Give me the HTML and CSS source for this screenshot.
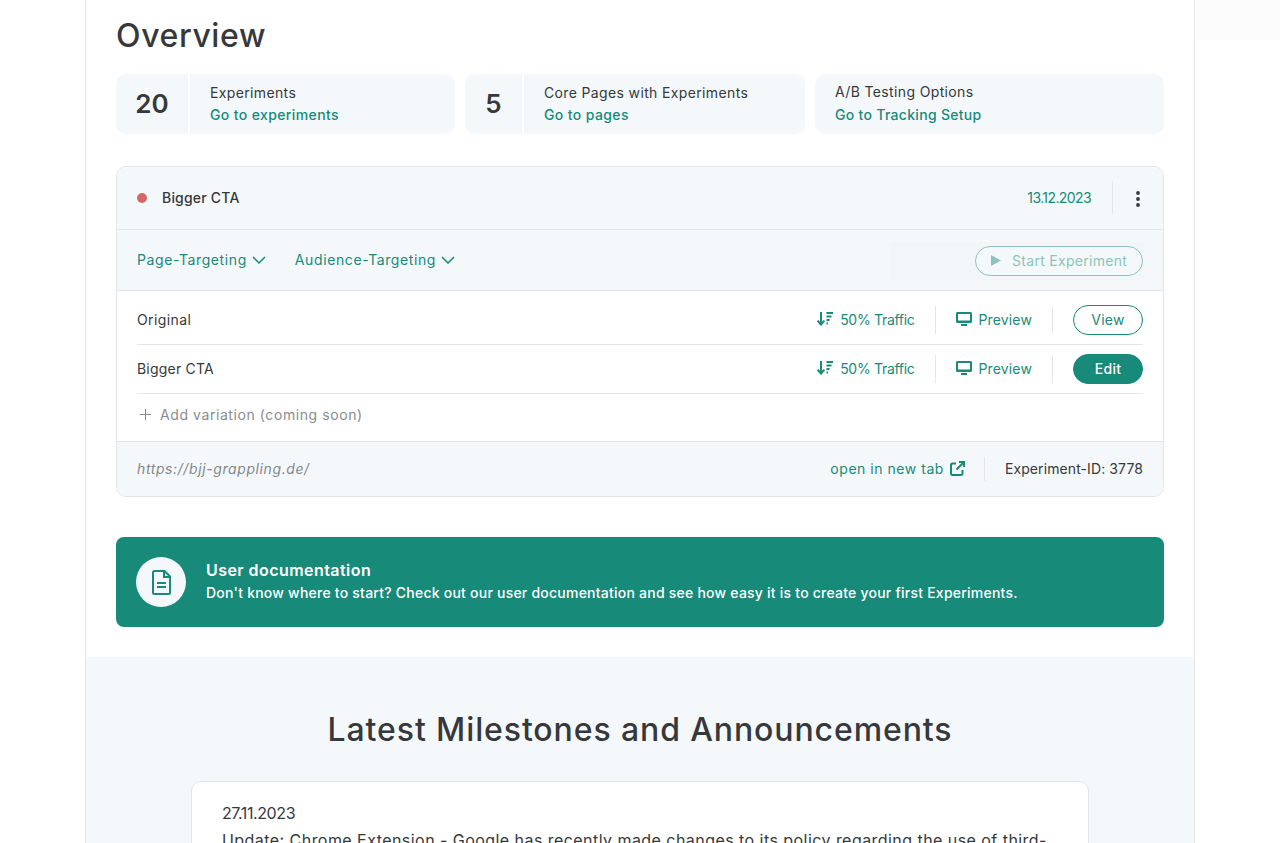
FILE: index.html
```html
<!DOCTYPE html>
<html lang="en">
<head>
<meta charset="utf-8">
<title>Overview</title>
<link rel="stylesheet" href="styles.css">
</head>
<body>
<div class="corner-fade"></div>
<main class="page">
  <section class="content">
    <h1 class="title">Overview</h1>
    <div class="stats">
      <div class="stat stat-a">
        <div class="stat-num">20</div>
        <div class="stat-body"><div class="stat-label">Experiments</div><a class="stat-link">Go to experiments</a></div>
      </div>
      <div class="stat stat-b">
        <div class="stat-num">5</div>
        <div class="stat-body"><div class="stat-label">Core Pages with Experiments</div><a class="stat-link">Go to pages</a></div>
      </div>
      <div class="stat stat-c">
        <div class="stat-body stat-body-full"><div class="stat-label stat-label-up">A/B Testing Options</div><a class="stat-link stat-link-tight">Go to Tracking Setup</a></div>
      </div>
    </div>

    <div class="card">
      <div class="card-head">
        <span class="dot"></span>
        <span class="exp-name">Bigger CTA</span>
        <span class="date">13.12.2023</span>
        <span class="kebab"><svg width="4" height="16" viewBox="0 0 4 16"><circle cx="2" cy="2" r="1.900"/><circle cx="2" cy="8" r="1.900"/><circle cx="2" cy="14" r="1.900"/></svg></span>
      </div>
      <div class="card-target">
        <a class="drop">Page-Targeting <svg class="chev" width="14" height="8" viewBox="0 0 14 8"><path d="M1 1l6 6 6-6"/></svg></a>
        <a class="drop">Audience-Targeting <svg class="chev" width="14" height="8" viewBox="0 0 14 8"><path d="M1 1l6 6 6-6"/></svg></a>
        <div class="start-wrap">
          <button class="start"><svg width="10" height="11" viewBox="0 0 10 11"><path d="M0 0l10 5.500-10 5.500z"/></svg><span>Start Experiment</span></button>
        </div>
      </div>
      <div class="variants">
        <div class="variant">
          <span class="v-name v-name-first">Original</span>
          <span class="traffic"><svg width="16" height="14" viewBox="0 0 16 14"><path d="M4 0v12M.6 8.600L4 12.600l3.400-4" class="st"/><path d="M9.500 1H16M9.500 4.500h5M9.500 8h3M9.500 11.500h1.500" class="st"/></svg>50% Traffic</span>
          <span class="preview"><svg width="16" height="14" viewBox="0 0 16 14"><path d="M1.500 0h13A1.500 1.500 0 0 1 16 1.500v8A1.500 1.500 0 0 1 14.500 11h-13A1.500 1.500 0 0 1 0 9.500v-8A1.500 1.500 0 0 1 1.500 0zM2 2v6.500h12V2zM5 12h6v2H5z" fill-rule="evenodd"/></svg>Preview</span>
          <button class="pill pill-outline">View</button>
        </div>
        <div class="variant">
          <span class="v-name">Bigger CTA</span>
          <span class="traffic"><svg width="16" height="14" viewBox="0 0 16 14"><path d="M4 0v12M.6 8.600L4 12.600l3.400-4" class="st"/><path d="M9.500 1H16M9.500 4.500h5M9.500 8h3M9.500 11.500h1.500" class="st"/></svg>50% Traffic</span>
          <span class="preview"><svg width="16" height="14" viewBox="0 0 16 14"><path d="M1.500 0h13A1.500 1.500 0 0 1 16 1.500v8A1.500 1.500 0 0 1 14.500 11h-13A1.500 1.500 0 0 1 0 9.500v-8A1.500 1.500 0 0 1 1.500 0zM2 2v6.500h12V2zM5 12h6v2H5z" fill-rule="evenodd"/></svg>Preview</span>
          <button class="pill pill-solid">Edit</button>
        </div>
        <div class="add-row">
          <svg width="11" height="11" viewBox="0 0 11 11"><path d="M5.500 0v11M0 5.500h11"/></svg>
          <span>Add variation (coming soon)</span>
        </div>
      </div>
      <div class="card-foot">
        <span class="url">https://bjj-grappling.de/</span>
        <a class="newtab">open in new tab <svg width="15" height="15" viewBox="0 0 15 15"><path d="M6 2.500H2.500A1.500 1.500 0 0 0 1 4v8.500A1.500 1.500 0 0 0 2.500 14H11a1.500 1.500 0 0 0 1.500-1.500V9M6.500 8.500L13.500 1.500M9 1h5v5"/></svg></a>
        <span class="exp-id">Experiment-ID: 3778</span>
      </div>
    </div>

    <div class="banner">
      <div class="banner-icon"><svg width="19" height="25" viewBox="0 0 19 25"><path d="M2.500 1H12.500L18 6.500V22.500A1.500 1.500 0 0 1 16.500 24H2.500A1.500 1.500 0 0 1 1 22.500V2.500A1.500 1.500 0 0 1 2.500 1zM12 1.500V7H17.500M5 13h9M5 17h9"/></svg></div>
      <div class="banner-text">
        <div class="banner-title">User documentation</div>
        <div class="banner-sub">Don't know where to start? Check out our user documentation and see how easy it is to create your first Experiments.</div>
      </div>
    </div>
  </section>

  <section class="news">
    <h2 class="news-title">Latest Milestones and Announcements</h2>
    <article class="news-card">
      <div class="news-date">27.11.2023</div>
      <p class="news-text">Update: Chrome Extension - Google has recently made changes to its policy regarding the use of third-party scripts in extensions.</p>
    </article>
  </section>
</main>
</body>
</html>
```
FILE: styles.css
```css
* { box-sizing: border-box; }
html, body { height: 100%; }
body {
  margin: 0;
  height: 843px;
  overflow: hidden;
  background: #fff;
  color: #36383b;
  font-family: "Inter", "Liberation Sans", sans-serif;
  font-size: 14px;
}
svg { display: block; flex: none; }
.corner-fade {
  position: absolute;
  top: 0;
  left: 1196px;
  width: 84px;
  height: 40px;
  background: #fcfcfc;
}
.page {
  width: 1110px;
  margin-left: 85px;
  border-left: 1px solid #e4e6e8;
  border-right: 1px solid #e4e6e8;
  height: 843px;
  overflow: hidden;
}
.content { padding: 0 30px 30px; }
.title {
  margin: 0;
  height: 74px;
  padding-top: 15px;
  font-size: 32px;
  line-height: 42px;
  font-weight: 500;
  letter-spacing: 0.6px;
}
.stats { display: flex; gap: 10px; height: 60px; }
.stat {
  display: flex;
  background: #f4f8fb;
  border-radius: 10px;
  overflow: hidden;
}
.stat-a { width: 339px; }
.stat-b { width: 340px; }
.stat-c { width: 349px; }
.stat-num {
  display: flex;
  align-items: center;
  justify-content: center;
  width: 72px;
  padding-bottom: 2px;
  font-size: 26px;
  font-weight: 600;
}
.stat-b .stat-num { width: 57px; }
.stat-body {
  flex: 1;
  margin-left: 2px;
  padding: 8px 0 0 20px;
  background: #f4f8fb;
  box-shadow: -2px 0 0 #fff;
  line-height: 22px;
}
.stat-body-full { margin-left: 0; padding-left: 20px; box-shadow: none; }
.stat-label { font-size: 14px; letter-spacing: 0.36px; }
.stat-label-up { margin-top: -1px; margin-bottom: 1px; }
.stat-link {
  display: block;
  color: #178a79;
  font-weight: 500;
  font-size: 14px;
  letter-spacing: 0.38px;
}
.stat-link-tight { letter-spacing: 0.3px; }
.card {
  margin-top: 32px;
  border: 1px solid #e2e6ea;
  border-radius: 10px;
  overflow: hidden;
  height: 331px;
}
.card-head {
  display: flex;
  align-items: center;
  height: 63px;
  padding: 0 20px;
  background: #f4f8fb;
  border-bottom: 1px solid #e2e6ea;
}
.dot {
  width: 10px;
  height: 10px;
  border-radius: 50%;
  background: #d36868;
  margin-right: 15px;
}
.exp-name { flex: 1; padding-bottom: 2px; font-size: 14px; font-weight: 500; letter-spacing: 0.2px; }
.date { color: #178a79; font-size: 14px; letter-spacing: -0.6px; padding-right: 21px; height: 32px; line-height: 32px; border-right: 1px solid #e2e6ea; }
.kebab { width: 50px; margin-right: -20px; padding: 2px 0 0 23px; fill: #36383b; }
.card-target {
  display: flex;
  align-items: center;
  gap: 29px;
  height: 61px;
  padding: 0 20px;
  background: #f4f8fb;
  border-bottom: 1px solid #e2e6ea;
}
.drop {
  display: flex;
  align-items: center;
  gap: 5px;
  padding-bottom: 1px;
  color: #178a79;
  font-size: 14px;
  letter-spacing: 0.6px;
}
.chev { fill: none; stroke: #178a79; stroke-width: 1.500; margin-top: 1px; }
.start-wrap {
  margin: 2px -3px 0 auto;
  display: flex;
  justify-content: flex-end;
  align-items: center;
  width: 257px;
  height: 38px;
  padding-right: 3px;
  background: #f2f6f9;
}
.start {
  display: flex;
  align-items: center;
  gap: 11px;
  width: 168px;
  height: 30px;
  padding: 0 15px 2px;
  border: 1px solid #8cc4bb;
  border-radius: 15px;
  background: #f4f8fb;
  color: #8cc4bb;
  fill: #8cc4bb;
  font: inherit;
  font-size: 14px;
  letter-spacing: 0.3px;
  white-space: nowrap;
}
.variants { padding: 0 20px; }
.variant {
  display: flex;
  align-items: center;
  border-bottom: 1px solid #e2e6ea;
  height: 49px;
}
.variant:first-child { height: 54px; padding-top: 5px; }
.v-name { flex: 1; padding-bottom: 2px; font-size: 14px; letter-spacing: 0.2px; }
.v-name-first { letter-spacing: 0.4px; }
.traffic, .preview {
  display: flex;
  align-items: center;
  gap: 6px;
  height: 28px;
  padding-bottom: 2px;
  color: #178a79;
  font-size: 14px;
  fill: #178a79;
}
.traffic { gap: 7px; padding-right: 21px; border-right: 1px solid #e2e6ea; letter-spacing: -0.3px; }
.preview { padding-left: 20px; padding-right: 20px; border-right: 1px solid #e2e6ea; letter-spacing: 0.15px; }
.st { fill: none; stroke: #178a79; stroke-width: 2; }
.pill {
  width: 70px;
  height: 30px;
  margin-left: 20px;
  padding: 0 0 2px;
  border-radius: 15px;
  border: 1px solid #178a79;
  font: inherit;
  font-size: 14px;
  letter-spacing: 0.3px;
}
.pill-outline { background: #fff; color: #178a79; }
.pill-solid { background: #178a79; color: #fff; font-weight: 500; }
.add-row {
  display: flex;
  align-items: center;
  gap: 9px;
  height: 47px;
  padding: 0 3px 7px;
  color: #8a8c8f;
  font-size: 14px;
  letter-spacing: 0.58px;
}
.add-row svg { fill: none; stroke: #8a8c8f; stroke-width: 1.100; }
.card-foot {
  display: flex;
  align-items: center;
  height: 56px;
  padding: 0 20px 2px;
  background: #f4f8fb;
  border-top: 1px solid #e2e6ea;
}
.url { flex: 1; color: #85878a; font-style: italic; font-size: 14px; letter-spacing: 0.6px; }
.newtab {
  display: flex;
  align-items: center;
  gap: 6px;
  height: 24px;
  padding-right: 19px;
  border-right: 1px solid #e2e6ea;
  color: #178a79;
  font-size: 14px;
  letter-spacing: 0.53px;
}
.newtab svg { fill: none; stroke: #178a79; stroke-width: 2; }
.exp-id { padding-left: 20px; font-size: 14px; letter-spacing: 0.1px; }
.banner {
  display: flex;
  align-items: center;
  gap: 20px;
  height: 90px;
  margin-top: 40px;
  padding: 0 20px;
  background: #178a79;
  border-radius: 8px;
  color: #fff;
}
.banner-icon {
  display: flex;
  align-items: center;
  justify-content: center;
  width: 50px;
  height: 50px;
  border-radius: 50%;
  background: #f4f8fb;
  flex: none;
}
.banner-icon svg { fill: none; stroke: #178a79; stroke-width: 2; }
.banner-text { padding-bottom: 1px; }
.banner-title { margin: -1px 0 1px; font-size: 16px; font-weight: 600; line-height: 22px; letter-spacing: 0.44px; }
.banner-sub { font-size: 14px; font-weight: 500; line-height: 22px; letter-spacing: 0.23px; }
.news {
  background: #f4f8fb;
  height: 186px;
  padding: 51px 105px 0;
}
.news-title {
  margin: 0;
  text-align: center;
  font-size: 32px;
  line-height: 44px;
  font-weight: 500;
  letter-spacing: 0.89px;
}
.news-card {
  margin-top: 29px;
  padding: 18px 30px;
  background: #fff;
  border: 1px solid #e2e6ea;
  border-radius: 10px;
  font-size: 16px;
  line-height: 27px;
}
.news-date { letter-spacing: -0.4px; }
.news-text { margin: 0; letter-spacing: 0.45px; }
```
